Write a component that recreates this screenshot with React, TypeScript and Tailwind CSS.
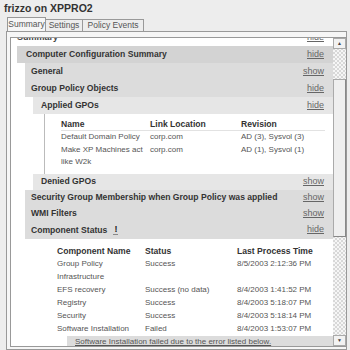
import React from 'react';

const Link = ({ label }: { label: string }) => (
    <span className='text-[9px] text-[#666] underline'>{label}</span>
);

const Band = ({ title, link, indent, bg, h = 'h-[17px]' }: { title: React.ReactNode; link: string; indent: string; bg: string; h?: string }) => (
    <div className={`${indent} ${h} flex`}>
        <div className={`${bg} flex-1 flex items-center justify-between pr-[9px]`}>
            {title}
            <Link label={link} />
        </div>
    </div>
);

const gpoRows = [
    { name: 'Default Domain Policy', link: 'corp.com', rev: 'AD (3), Sysvol (3)' },
    { name: 'Make XP Machines act', link: 'corp.com', rev: 'AD (1), Sysvol (1)' },
    { name: 'like W2k', link: '', rev: '' },
];

const componentRows = [
    { name: 'Group Policy', status: 'Success', time: '8/5/2003 2:12:36 PM' },
    { name: 'Infrastructure', status: '', time: '' },
    { name: 'EFS recovery', status: 'Success (no data)', time: '8/4/2003 1:41:52 PM' },
    { name: 'Registry', status: 'Success', time: '8/4/2003 5:18:07 PM' },
    { name: 'Security', status: 'Success', time: '8/4/2003 5:18:14 PM' },
    { name: 'Software Installation', status: 'Failed', time: '8/4/2003 1:53:07 PM' },
];

const App = () => {
    return (
        <div className="w-[350px] h-[350px] overflow-hidden bg-[#ededed] text-[#444]" style={{ fontFamily: '"Liberation Sans", Arial, sans-serif' }}>
            <div className='h-[17px] pl-[4px] flex items-center text-[10.5px] font-bold text-[#333]'>frizzo on XPPRO2</div>

            {/* tabs */}
            <div className='h-[14px] pl-[7px] flex items-end text-[8.5px] text-[#555]'>
                <div className='h-[14px] w-[39px] border border-b-0 border-[#999] bg-[#f6f6f6] flex items-center justify-center'>Summary</div>
                <div className='h-[12px] w-[37px] border-t border-r border-[#999] flex items-center justify-center'>Settings</div>
                <div className='h-[12px] w-[61px] border-t border-r border-[#999] flex items-center justify-center'>Policy Events</div>
            </div>

            <div className='ml-[6px] mr-[3px] h-[319px] border border-[#999] bg-[#f6f6f6] pt-[5px] pl-[3px] flex'>
                <div className='flex-1 h-[310px] border border-[#999] border-r-0 bg-white overflow-hidden'>
                    {/* clipped previous section */}
                    <div className='h-[8px] overflow-hidden'>
                        <div className='h-[16px] mt-[-8px] pl-[6px] pr-[9px] flex items-center justify-between'>
                            <span className='text-[9px] font-bold text-[#444]'>Summary</span>
                            <Link label='hide' />
                        </div>
                    </div>

                    <Band indent='pl-[6px]' bg='bg-[#d3d3d3] pl-[9px]' title={<span className='text-[8.6px] font-bold text-[#333]'>Computer Configuration Summary</span>} link='hide' />
                    <Band indent='pl-[14px]' bg='bg-[#dcdcdc] pl-[6px]' title={<span className='text-[8.6px] font-bold text-[#333]'>General</span>} link='show' />
                    <Band indent='pl-[14px]' bg='bg-[#dcdcdc] pl-[6px]' title={<span className='text-[8.6px] font-bold text-[#333]'>Group Policy Objects</span>} link='hide' />
                    <Band indent='pl-[22px]' bg='bg-[#e6e6e6] pl-[8px]' title={<span className='text-[8.6px] font-bold text-[#333]'>Applied GPOs</span>} link='hide' />

                    <div className='pl-[33px] flex'>
                        <div className='flex-1 border-l border-[#bbb] pl-[16px] pr-[8px] pt-[4px] pb-[5px] text-[8px]'>
                            <div className='h-[13px] flex items-center font-bold text-[8.6px] text-[#333] border-b border-[#e2e2e2]'>
                                <div className='w-[89px]'>Name</div>
                                <div className='w-[91px]'>Link Location</div>
                                <div>Revision</div>
                            </div>
                            {gpoRows.map((r) => (
                                <div key={r.name} className='h-[12.5px] flex items-center text-[#555]'>
                                    <div className='w-[89px]'>{r.name}</div>
                                    <div className='w-[91px]'>{r.link}</div>
                                    <div>{r.rev}</div>
                                </div>
                            ))}
                        </div>
                    </div>

                    <Band indent='pl-[22px]' bg='bg-[#e6e6e6] pl-[8px]' h='h-[16px]' title={<span className='text-[8.6px] font-bold text-[#333]'>Denied GPOs</span>} link='show' />
                    <Band indent='pl-[14px]' bg='bg-[#dcdcdc] pl-[6px]' h='h-[16px]' title={<span className='text-[8.6px] font-bold text-[#333]'>Security Group Membership when Group Policy was applied</span>} link='show' />
                    <Band indent='pl-[14px]' bg='bg-[#dcdcdc] pl-[6px]' h='h-[16px]' title={<span className='text-[8.6px] font-bold text-[#333]'>WMI Filters</span>} link='show' />
                    <Band indent='pl-[14px]' bg='bg-[#dcdcdc] pl-[6px]' title={
                        <span className='text-[8.6px] font-bold text-[#333] flex items-center gap-[6px]'>
                            Component Status
                            <span className='text-[9px] font-bold text-[#222] leading-none border-b border-[#888] px-[1px]'>!</span>
                        </span>
                    } link='hide' />

                    <div className='pl-[22px] flex'>
                        <div className='flex-1 pl-[24px] pt-[6px] text-[8px]'>
                            <div className='h-[13px] pr-[8px] flex items-center font-bold text-[8.6px] text-[#333]'>
                                <div className='w-[88px]'>Component Name</div>
                                <div className='w-[92px]'>Status</div>
                                <div>Last Process Time</div>
                            </div>
                            {componentRows.map((r) => (
                                <div key={r.name} className='h-[13px] pr-[8px] flex items-center text-[#555]'>
                                    <div className='w-[88px]'>{r.name}</div>
                                    <div className='w-[92px]'>{r.status}</div>
                                    <div>{r.time}</div>
                                </div>
                            ))}
                            <div className='ml-[10px] h-[13px] bg-[#dcdcdc] pl-[8px] flex items-center text-[#555] underline'>
                                Software Installation failed due to the error listed below.
                            </div>
                        </div>
                    </div>
                </div>

                {/* scrollbar */}
                <div className='w-[13px] h-[310px] flex flex-col border-y border-[#999] bg-[repeating-conic-gradient(#d8d8d8_0%_25%,#f6f6f6_0%_50%)] bg-[length:4px_4px]'>
                    <div className='h-[11px] bg-[#f2f2f2] border border-[#aaa] flex items-center justify-center text-[5px] text-[#444]'>▲</div>
                    <div className='h-[30px]' />
                    <div className='h-[158px] bg-[#efefef] border border-[#aaa] border-r-[#888] border-b-[#888]' />
                    <div className='flex-1' />
                    <div className='h-[11px] bg-[#f2f2f2] border border-[#aaa] flex items-center justify-center text-[5px] text-[#444]'>▼</div>
                </div>
            </div>
        </div>
    );
};

export default App;
